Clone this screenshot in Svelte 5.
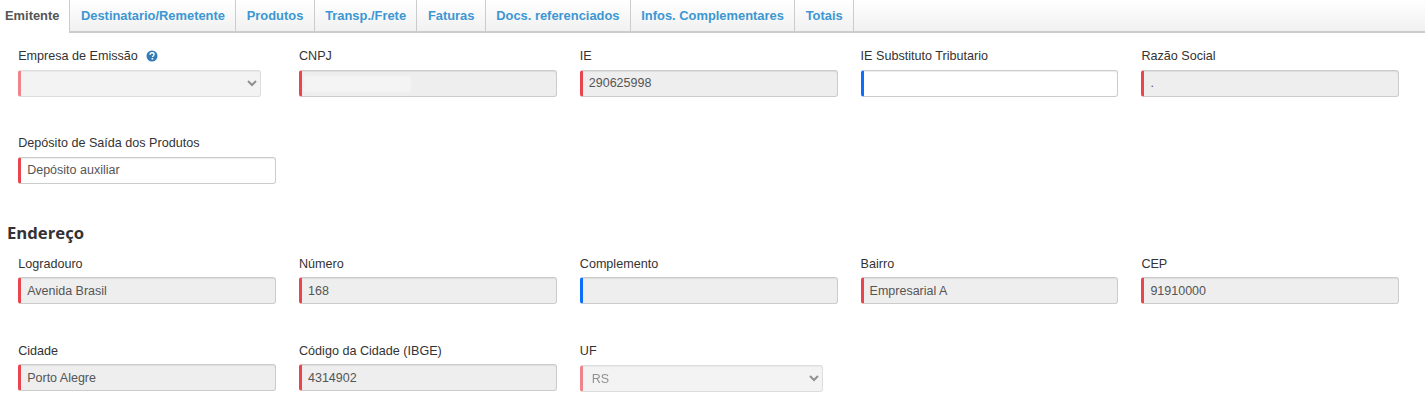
<script>
  const tabs = ['Emitente', 'Destinatario/Remetente', 'Produtos', 'Transp./Frete', 'Faturas', 'Docs. referenciados', 'Infos. Complementares', 'Totais'];

  const emitente = [
    { label: 'Empresa de Emissão', type: 'select', help: true, value: '' },
    { label: 'CNPJ', readonly: true, value: '', blur: true },
    { label: 'IE', readonly: true, value: '290625998' },
    { label: 'IE Substituto Tributario', optional: true, value: '' },
    { label: 'Razão Social', readonly: true, value: '.' },
    { label: 'Depósito de Saída dos Produtos', value: 'Depósito auxiliar' }
  ];

  const endereco = [
    { label: 'Logradouro', readonly: true, value: 'Avenida Brasil' },
    { label: 'Número', readonly: true, value: '168' },
    { label: 'Complemento', readonly: true, optional: true, value: '' },
    { label: 'Bairro', readonly: true, value: 'Empresarial A' },
    { label: 'CEP', readonly: true, value: '91910000' },
    { label: 'Cidade', readonly: true, value: 'Porto Alegre' },
    { label: 'Código da Cidade (IBGE)', readonly: true, value: '4314902' },
    { label: 'UF', type: 'select', value: 'RS' }
  ];
</script>

{#snippet field(f)}
  <div class="field">
    <div class="label">
      {f.label}
      {#if f.help}
        <svg class="help" width="12" height="12" viewBox="0 0 12 12">
          <circle cx="6" cy="6" r="5.5" fill="#337ab7" />
          <path d="M4.1 4.7c0-1.2.9-1.9 2-1.9s1.9.7 1.9 1.7c0 1.4-1.5 1.4-1.5 2.4" fill="none" stroke="#fff" stroke-width="1.4" />
          <rect x="5.6" y="8" width="1.6" height="1.5" fill="#fff" />
        </svg>
      {/if}
    </div>
    {#if f.type === 'select'}
      <select class="ctl sel" disabled>
        <option>{f.value}</option>
      </select>
    {:else}
      <div class="wrap">
        <input class="ctl" class:optional={f.optional} readonly={f.readonly} value={f.value} />
        {#if f.blur}<span class="blurred"></span>{/if}
      </div>
    {/if}
  </div>
{/snippet}

<nav class="tabs">
  {#each tabs as tab, i}
    <a class="tab" class:active={i === 0} href="#top">{tab}</a>
  {/each}
</nav>

<section class="grid first">
  {#each emitente as f}
    {@render field(f)}
  {/each}
</section>

<h4 class="title">Endereço</h4>

<section class="grid address">
  {#each endereco as f}
    {@render field(f)}
  {/each}
</section>

<style>
  :global(body) {
    font-family: "Liberation Sans", Arial, sans-serif;
    background-color: #fff;
    color: #333;
  }

  .tabs {
    display: flex;
    height: 33px;
    border-bottom: 2px solid #ccc;
    box-sizing: border-box;
    background: linear-gradient(#fff, #f1f1f1);
  }

  .tab {
    display: block;
    box-sizing: border-box;
    height: 31px;
    padding: 8px 10.3px 0 10.5px;
    font-size: 12.9px;
    font-weight: bold;
    line-height: 15px;
    color: #3c97d3;
    text-decoration: none;
    border-right: 1px solid #ccc;
  }

  .tab.active {
    height: 33px;
    padding: 8px 10px 0 5px;
    background: #fff;
    color: #555;
  }

  .grid {
    display: grid;
    grid-template-columns: repeat(5, 280.8px);
    grid-auto-rows: 87px;
    padding-left: 18.2px;
  }

  .grid.first {
    padding-top: 15px;
  }

  .label {
    height: 22px;
    font-size: 12.6px;
    line-height: 16px;
    color: #333;
  }

  .address .label {
    box-sizing: border-box;
    padding-top: 1px;
  }

  .help {
    margin-left: 5px;
    vertical-align: -2px;
  }

  .wrap {
    position: relative;
    width: 257.8px;
  }

  .ctl {
    display: block;
    box-sizing: border-box;
    width: 257.8px;
    height: 27px;
    margin: 0;
    padding: 0 6px 1px 6px;
    font-family: inherit;
    font-size: 12.5px;
    color: #555;
    background: #fff;
    border: 1px solid #ccc;
    border-left: 3px solid #e8454f;
    border-radius: 3px;
    box-shadow: inset 0 1px 1px rgba(0, 0, 0, 0.075);
    outline: none;
  }

  .address .ctl {
    padding-bottom: 0;
  }

  .ctl[readonly] {
    background: #eee;
  }

  .ctl.optional {
    border-left-color: #0d6efd;
  }

  .sel {
    width: 243px;
    padding-left: 5px;
    background: #eee;
    opacity: 0.65;
  }

  .address .sel {
    margin-top: 1px;
  }

  .blurred {
    position: absolute;
    left: 5px;
    top: 6px;
    width: 107px;
    height: 16px;
    background: #f4f4f4;
    filter: blur(1px);
  }

  .title {
    margin: 0;
    padding: 0 0 0 7px;
    height: 33px;
    font-family: "Open Sans", sans-serif;
    font-size: 16.7px;
    font-weight: 700;
    line-height: 22px;
    color: #333;
  }
</style>
